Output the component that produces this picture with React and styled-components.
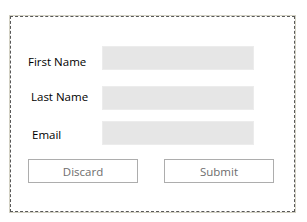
import React from "react"
import styled, { createGlobalStyle } from "styled-components"

const GlobalStyle = createGlobalStyle`
  html, body {
    margin: 0;
    padding: 0;
    background: #ffffff;
  }
  body {
    font-family: "Open Sans", "Segoe UI", sans-serif;
    font-size: 11.5px;
  }
`

const Frame = styled.div`
  margin: 15px 0 0 9px;
  width: 287px;
  height: 198px;
  box-sizing: border-box;
  border: 1px solid #d3d1c4;
`
const Panel = styled.div`
  height: 100%;
  box-sizing: border-box;
  border: 1px dashed #585858;
  padding: 29px 0 0 17px;
`
const Row = styled.div`
  display: flex;
  align-items: center;
  height: 24px;
  margin-top: ${(p) => p.gap || 0}px;
`
const Label = styled.label`
  width: 74px;
  padding-left: ${(p) => p.indent || 0}px;
  box-sizing: border-box;
  position: relative;
  top: ${(p) => p.shift || 0}px;
  color: #000000;
  white-space: nowrap;
`
const Field = styled.input`
  width: 152px;
  height: 24px;
  box-sizing: border-box;
  margin: 0;
  border: 1px solid #ececec;
  background: #e6e6e6;
  outline: none;
`
const Buttons = styled.div`
  display: flex;
  gap: 26px;
  margin-top: 14px;
`
const Button = styled.button`
  width: 110px;
  height: 24px;
  box-sizing: border-box;
  border: 1px solid #adadad;
  background: #ffffff;
  color: #6d6d6d;
  font-family: inherit;
  font-size: 11.5px;
  padding: 0;
`

const fields = [
  { label: "First Name", indent: 0, shift: 3, gap: 0 },
  { label: "Last Name", indent: 3, shift: -2, gap: 16 },
  { label: "Email", indent: 4, shift: 1, gap: 11 },
]

export default function App() {
  return (
    <>
      <GlobalStyle />
      <Frame>
        <Panel>
          {fields.map((f) => (
            <Row key={f.label} gap={f.gap}>
              <Label indent={f.indent} shift={f.shift}>
                {f.label}
              </Label>
              <Field type="text" />
            </Row>
          ))}
          <Buttons>
            <Button>Discard</Button>
            <Button>Submit</Button>
          </Buttons>
        </Panel>
      </Frame>
    </>
  )
}
